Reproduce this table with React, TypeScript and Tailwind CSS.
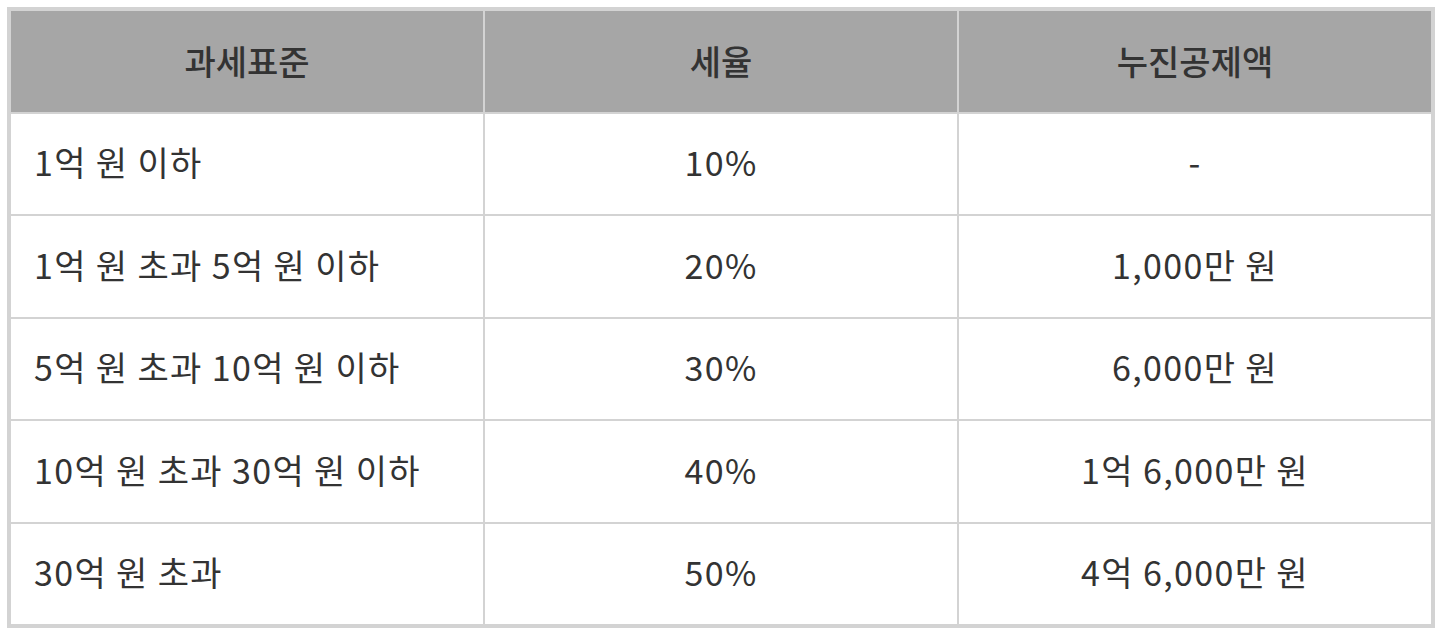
const headers = ['과세표준', '세율', '누진공제액']

const rows = [
  ['1억 원 이하', '10%', '-'],
  ['1억 원 초과 5억 원 이하', '20%', '1,000만 원'],
  ['5억 원 초과 10억 원 이하', '30%', '6,000만 원'],
  ['10억 원 초과 30억 원 이하', '40%', '1억 6,000만 원'],
  ['30억 원 초과', '50%', '4억 6,000만 원'],
]

export default function App() {
  return (
    <div
      className="w-[1441px] h-[630px] bg-white pt-[7px] pl-[7px]"
      style={{ fontFamily: '"Noto Sans CJK KR", "Noto Sans", sans-serif' }}
    >
      <div className="grid grid-cols-3 grid-rows-6 gap-[2px] w-[1428px] h-[621px] border-4 border-[#d3d3d3] bg-[#d3d3d3]">
        {headers.map((h) => (
          <div
            key={h}
            className="flex items-center justify-center bg-[#a6a6a6] pb-[2px] text-[34px] font-medium text-[#333333]"
          >
            {h}
          </div>
        ))}
        {rows.map((row) =>
          row.map((cell, i) => (
            <div
              key={row[0] + i}
              className={`flex items-center bg-white pb-[4px] text-[34px] tracking-[0.04em] text-[#333333] ${
                i === 0 ? 'justify-start pl-[23px]' : 'justify-center'
              }`}
            >
              {cell}
            </div>
          ))
        )}
      </div>
    </div>
  )
}
